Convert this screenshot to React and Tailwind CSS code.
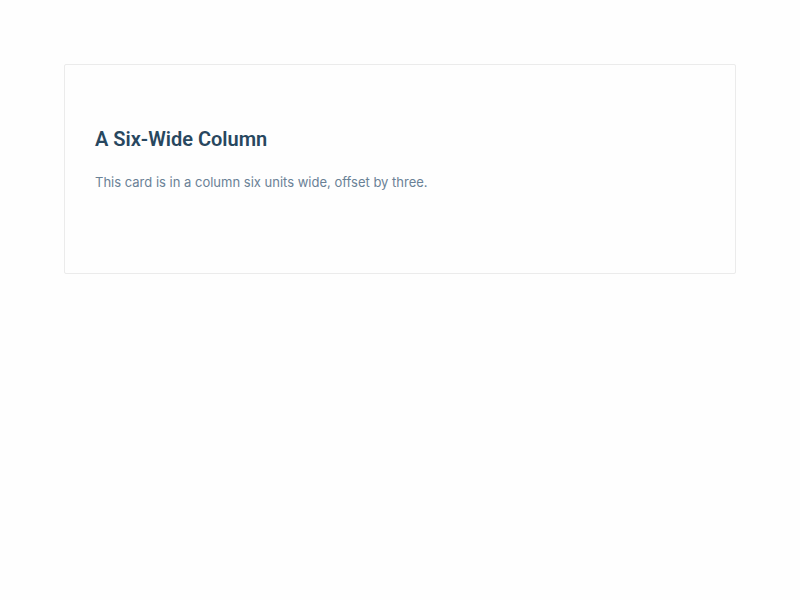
export default function App() {
  return (
    <main className="min-h-screen bg-[#fefefe] p-16 font-['Inter','Liberation_Sans',sans-serif]">
      <section className="rounded-xs border border-[#ebebeb] bg-[#fefefe] px-[30px] pt-[58px] pb-[77px]">
        <h2 className="font-['Roboto','Liberation_Sans',sans-serif] text-[20px] leading-8 font-semibold text-[#28475f]">A Six-Wide Column</h2>
        <p className="mt-[14px] text-[13px] leading-[27px] font-normal text-[#6a8196]">
          This card is in a column six units wide, offset by three.
        </p>
      </section>
    </main>
  );
}
